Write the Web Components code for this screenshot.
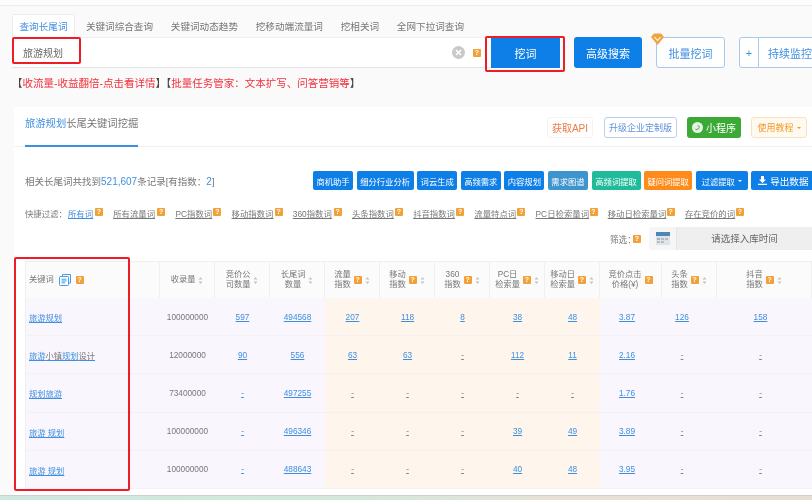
<!DOCTYPE html>
<html lang="zh">
<head>
<meta charset="utf-8">
<title>长尾词挖掘</title>
<style>
  html, body { margin: 0; padding: 0; width: 812px; height: 500px; overflow: hidden; background: #fafafa; }
  body { font-family: "Liberation Sans", "Noto Sans CJK SC", sans-serif; color: #666; }
</style>
</head>
<body>
<word-app></word-app>
<script>
'use strict';

const BLUE = '#0f7fe8';
const LINK = '#3f8fe0';

class XHelp extends HTMLElement {
  constructor() {
    super();
    this.attachShadow({ mode: 'open' }).innerHTML = `
      <style>
        :host {
          display: inline-flex; align-items: center; justify-content: center;
          flex: none; width: 8px; height: 8px; border-radius: 1px;
          background: #f2a138; color: #fff; font: bold 7px/8px "Liberation Sans", sans-serif;
        }
      </style>?`;
  }
}

class XSort extends HTMLElement {
  constructor() {
    super();
    this.attachShadow({ mode: 'open' }).innerHTML = `
      <style>:host { display: inline-flex; flex: none; width: 5px; height: 9px; }</style>
      <svg width="5" height="9" viewBox="0 0 5 9"><path d="M2.5 1 4.5 3.4H.5zM2.5 8 .5 5.6h4z" fill="#c4c4c4"/></svg>`;
  }
}

class XBtn extends HTMLElement {
  constructor() {
    super();
    this.attachShadow({ mode: 'open' }).innerHTML = `
      <style>
        :host {
          display: inline-flex; align-items: center; justify-content: center; gap: 3px;
          flex: none; box-sizing: border-box; height: 19px; border-radius: 2px;
          background: var(--bg, ${BLUE}); color: var(--fg, #fff); border: 1px solid var(--bd, transparent);
          font-size: var(--fs, 8.3px); white-space: nowrap;
        }
      </style><slot></slot>`;
  }
}

class XTabs extends HTMLElement {
  constructor() {
    super();
    const tabs = ['查询长尾词', '关键词综合查询', '关键词动态趋势', '挖移动端流量词', '挖相关词', '全网下拉词查询'];
    this.attachShadow({ mode: 'open' }).innerHTML = `
      <style>
        :host { display: flex; height: 23px; margin: 8px 0 0 12px; font-size: 9.6px; color: #777; }
        span { padding: 0 8.9px; line-height: 25px; white-space: nowrap; }
        span.on {
          box-sizing: border-box; width: 63px; padding: 0; text-align: center; margin-right: 2px;
          color: ${LINK}; background: #fff; border: 1px solid #ececec; border-bottom: 0; border-radius: 2px 2px 0 0;
          line-height: 23px;
        }
      </style>
      ${tabs.map((t, i) => `<span class="${i ? '' : 'on'}">${t}</span>`).join('')}`;
  }
}

class XSearch extends HTMLElement {
  constructor() {
    super();
    this.attachShadow({ mode: 'open' }).innerHTML = `
      <style>
        :host { display: flex; height: 31px; margin-left: 12px; width: 850px; }
        .field {
          width: 479px; box-sizing: border-box; display: flex; align-items: center; gap: 8px;
          padding: 0 10px 0 11px; background: #fff; border-top: 1px solid #eee; border-bottom: 1px solid #e4e4e4;
        }
        .kw { flex: 1; font-size: 10px; color: #666; }
        x-btn { height: 31px; border-radius: 3px; --fs: 11px; }
        .go { width: 69px; border-radius: 0; margin-right: 14px; }
        .adv { width: 68px; margin-right: 14px; }
        .batch { width: 69px; --bg: #fff; --fg: ${LINK}; --bd: #a9c9ec; margin-right: 14px; position: relative; }
        .gem { position: absolute; left: -6px; top: -5px; }
        .plus { width: 20px; --bg: #fff; --fg: ${LINK}; --bd: #a9c9ec; border-radius: 3px 0 0 3px; }
        .watch { width: 60px; justify-content: flex-start; padding-left: 9px; --bg: #fff; --fg: ${LINK}; --bd: #a9c9ec; border-left: 0; border-radius: 0 3px 3px 0; }
      </style>
      <div class="field">
        <span class="kw">旅游规划</span>
        <svg width="13" height="13" viewBox="0 0 13 13"><circle cx="6.5" cy="6.5" r="6.5" fill="#c9c9c9"/><path d="M4 4l5 5M9 4l-5 5" stroke="#fff" stroke-width="1.7"/></svg>
        <x-help></x-help>
      </div>
      <x-btn class="go">挖词</x-btn>
      <x-btn class="adv">高级搜索</x-btn>
      <x-btn class="batch">批量挖词
        <svg class="gem" width="13" height="12" viewBox="0 0 13 12"><path d="M3 .5h7l3 3.5-6.5 8L0 4z" fill="#eea33c"/><path d="M3.5 4 6.5 7.5 9.5 4" fill="none" stroke="#fff" stroke-width="1.1"/></svg>
      </x-btn>
      <x-btn class="plus">+</x-btn>
      <x-btn class="watch">持续监控</x-btn>`;
  }
}

class XNotice extends HTMLElement {
  constructor() {
    super();
    this.attachShadow({ mode: 'open' }).innerHTML = `
      <style>
        :host { display: block; height: 39px; margin-left: 12px; font-size: 10.5px; line-height: 30px; color: #444; white-space: nowrap; }
        b { font-weight: normal; color: #f2303a; }
      </style>
      【<b>收流量-收益翻倍-点击看详情</b>】【<b>批量任务管家\uFF1A文本扩写、问答营销等</b>】`;
  }
}

class XPanelHead extends HTMLElement {
  constructor() {
    super();
    this.attachShadow({ mode: 'open' }).innerHTML = `
      <style>
        :host {
          display: flex; align-items: flex-start; height: 40px; box-sizing: border-box;
          padding-left: 11px; border-bottom: 1px solid #f1f1f1;
        }
        .title {
          box-sizing: border-box; height: 40px; width: 113px; padding-top: 10px; font-size: 10.3px; line-height: 13px;
          color: #777; border-bottom: 2px solid ${LINK}; white-space: nowrap;
        }
        .title em { font-style: normal; color: ${LINK}; }
        .acts { display: flex; align-items: center; margin: 10px 0 0 409px; }
        x-btn { height: 21px; --fs: 9px; border-radius: 3px; }
        .api { width: 46px; margin-right: 11px; --bg: #fff; --fg: #ee7a45; --bd: #f8f2ee; --fs: 10px; }
        .ent { width: 73px; margin-right: 10px; --bg: #fff; --fg: #5f92dc; --bd: #bccff0; }
        .app { width: 54px; margin-right: 10px; --bg: #3aa935; --fs: 10px; }
        .doc { width: 56px; --bg: #fffaf1; --fg: #f39a26; --bd: #fbe2bd; }
        .caret { width: 0; height: 0; border: 2.5px solid transparent; border-top-color: currentColor; border-bottom: 0; }
      </style>
      <div class="title"><em>旅游规划</em>长尾关键词挖掘</div>
      <div class="acts">
        <x-btn class="api">获取API</x-btn>
        <x-btn class="ent">升级企业定制版</x-btn>
        <x-btn class="app">
          <svg width="11" height="11" viewBox="0 0 11 11"><circle cx="5.5" cy="5.5" r="5.5" fill="#e6f3e4"/><path d="M3.6 6.8a1.3 1.3 0 0 0 2 .6L7.2 5.6a1.3 1.3 0 0 0-1.8-1.7" fill="none" stroke="#6cb968" stroke-width="1.1"/></svg>
          小程序
        </x-btn>
        <x-btn class="doc">使用教程<i class="caret"></i></x-btn>
      </div>`;
  }
}

class XStats extends HTMLElement {
  constructor() {
    super();
    const tools = [
      ['商机助手', 40], ['细分行业分析', 57], ['词云生成', 40], ['高频需求', 40], ['内容规划', 40],
      ['需求图谱', 40, '#3d94cf'], ['高频词提取', 49, '#1fbb9a'], ['疑问词提取', 48, '#ff8c1a'],
    ];
    this.attachShadow({ mode: 'open' }).innerHTML = `
      <style>
        :host { display: flex; align-items: center; height: 19px; margin-top: 24px; padding-left: 11px; font-size: 9.5px; color: #777; white-space: nowrap; }
        .sum { width: 288px; flex: none; }
        em { font-style: normal; color: ${LINK}; font-size: 10px; }
        .tools { display: flex; gap: 3.6px; }
        .caret { width: 0; height: 0; border: 2.5px solid transparent; border-top-color: #fff; border-bottom: 0; }
        .out { --fs: 9.6px; width: 64px; }
      </style>
      <div class="sum">相关长尾词共找到<em>521,607</em>条记录[有指数\uFF1A<em>2</em>]</div>
      <div class="tools">
        ${tools.map(([t, w, c]) => `<x-btn style="width:${w}px;${c ? `--bg:${c}` : ''}">${t}</x-btn>`).join('')}
        <x-btn style="width:52px">过滤提取<i class="caret"></i></x-btn>
        <x-btn class="out">
          <svg width="9" height="9" viewBox="0 0 9 9"><path d="M3 0h3v3.500h2L4.500 7 1 3.500h2zM0 7.800h9V9H0z" fill="#fff"/></svg>导出数据
        </x-btn>
      </div>`;
  }
}

class XFilters extends HTMLElement {
  constructor() {
    super();
    const items = [['所有词', 25, true], ['所有流量词', 42], ['PC指数词', 36], ['移动指数词', 41], ['360指数词', 39], ['头条指数词', 41],
      ['抖音指数词', 41], ['流量特点词', 41], ['PC日检索量词', 52], ['移动日检索量词', 57], ['存在竞价的词', 49]];
    this.attachShadow({ mode: 'open' }).innerHTML = `
      <style>
        :host { display: flex; align-items: center; height: 14px; margin-top: 16px; padding-left: 11px; font-size: 8.4px; color: #777; white-space: nowrap; }
        .lead { width: 43px; }
        .it { display: flex; align-items: center; gap: 2px; margin-right: 10.2px; }
        u { display: block; text-underline-offset: 1px; }
        u.on { color: ${LINK}; }
        x-help { margin-bottom: 2px; }
      </style>
      <span class="lead">快捷过滤\uFF1A</span>
      ${items.map(([t, w, on]) => `<span class="it"><u class="${on ? 'on' : ''}" style="width:${w}px">${t}</u><x-help></x-help></span>`).join('')}`;
  }
}

class XDateFilter extends HTMLElement {
  constructor() {
    super();
    this.attachShadow({ mode: 'open' }).innerHTML = `
      <style>
        :host { display: flex; align-items: center; height: 23px; margin-top: 7px; padding-left: 596px; width: 202px; font-size: 9.5px; color: #777; white-space: nowrap; }
        .lab { flex: none; width: 23px; font-size: 8.6px; }
        x-help { margin-right: 8px; }
        .box { display: flex; flex: none; width: 163px; height: 23px; background: #efefef; border-radius: 3px 0 0 3px; }
        .ic { display: flex; align-items: center; justify-content: center; width: 27px; background: #f6f6f6; border-right: 1px solid #e6e6e6; border-radius: 3px 0 0 3px; }
        .tx { flex: 1; text-align: center; line-height: 23px; color: #666; }
      </style>
      <span class="lab">筛选\uFF1A</span><x-help></x-help>
      <div class="box">
        <span class="ic"><svg width="14" height="13" viewBox="0 0 14 13"><rect width="14" height="13" fill="#dfe4ea"/><rect width="14" height="4" fill="#4e86b8"/><rect x="1" y="6" width="3" height="2" fill="#9fb4c8"/><rect x="5" y="6" width="3" height="2" fill="#bbb"/><rect x="9" y="6" width="3" height="2" fill="#bbb"/><rect x="1" y="9" width="3" height="2" fill="#bbb"/><rect x="5" y="9" width="3" height="2" fill="#bbb"/></svg></span>
        <span class="tx">请选择入库时间</span>
      </div>`;
  }
}

const COLS = '135px 55px 55px 55px 55px 55px 55px 55px 55px 62px 55px 95px';

class WordTable extends HTMLElement {
  constructor() {
    super();
    const head = [
      ['收录量', 0], ['竞价公<br>司数量', 0], ['长尾词<br>数量', 0], ['流量<br>指数', 1], ['移动<br>指数', 1], ['360<br>指数', 1],
      ['PC日<br>检索量', 1], ['移动日<br>检索量', 1], ['竞价点击<br>价格(¥)', 2], ['头条<br>指数', 1], ['抖音<br>指数', 1],
    ];
    const rows = [
      ['旅游规划', '100000000', '597', '494568', '207', '118', '8', '38', '48', '3.87', '126', '158'],
      ['旅游<span>小镇</span>规划<span>设计</span>', '12000000', '90', '556', '63', '63', '-', '112', '11', '2.16', '-', '-'],
      ['规划旅游', '73400000', '-', '497255', '-', '-', '-', '-', '-', '1.76', '-', '-'],
      ['旅游 规划', '100000000', '-', '496346', '-', '-', '-', '39', '49', '3.89', '-', '-'],
      ['旅游 规划', '100000000', '-', '488643', '-', '-', '-', '40', '48', '3.95', '-', '-'],
    ];
    const tint = (i) => (i >= 4 && i <= 8 ? 'warm' : 'cool');
    const nudge = { 9: 8, 10: 15, 11: 8 };
    const cell = (v, i) => {
      if (i === 0) return `<div class="td kw cool"><a>${v}</a></div>`;
      if (i === 1) return `<div class="td cool">${v}</div>`;
      const dash = v === '-' && i !== 2 ? ' mute' : '';
      const pad = nudge[i] ? ` style="padding-right:${nudge[i]}px"` : '';
      return `<div class="td ${tint(i)}"${pad}><a class="${dash}">${v}</a></div>`;
    };
    this.attachShadow({ mode: 'open' }).innerHTML = `
      <style>
        :host { display: block; margin: 11px 0 0 11px; font-size: 8.25px; color: #777; }
        .row { display: grid; grid-template-columns: ${COLS}; height: 38.2px; box-sizing: border-box; border-bottom: 1px solid #f5f1f3; }
        .head { height: 37px; background: #fbfbfb; border-top: 1px solid #efefef; border-bottom: 0; }
        .th { display: flex; align-items: center; justify-content: center; gap: 3px; box-sizing: border-box; line-height: 10.5px; text-align: center; border-right: 1px solid #f0f0f0; }
        .th.kw { justify-content: flex-start; padding-left: 3px; gap: 5px; border-left: 1px solid #f0f0f0; }
        .td { display: flex; align-items: center; justify-content: center; box-sizing: border-box; padding-top: 1px; white-space: pre; }
        .td.kw { justify-content: flex-start; padding-left: 3px; border-left: 1px solid #f0ecf3; }
        .cool { background: #f9f6fd; }
        .warm { background: #fef6ec; }
        a { color: ${LINK}; text-decoration: underline; text-underline-offset: 1px; }
        a.mute { color: #7d8794; }
        a span { color: #777; }
      </style>
      <div class="row head">
        <div class="th kw">关键词
          <svg width="12" height="12" viewBox="0 0 12 12" fill="none" stroke="#4a9be8" stroke-width="1"><path d="M3.500 2.500V.5h8v8.500h-2"/><rect x=".5" y="2.500" width="9" height="9" rx=".8"/><path d="M2.500 5.200h5M2.500 7h5M2.500 8.800h3.500"/></svg>
          <x-help></x-help>
        </div>
        ${head.map(([t, k]) => `<div class="th"><span>${t}</span>${k ? '<x-help></x-help>' : ''}${k === 2 ? '' : '<x-sort></x-sort>'}</div>`).join('')}
      </div>
      ${rows.map((r) => `<div class="row">${r.map(cell).join('')}</div>`).join('')}`;
  }
}

class XMarks extends HTMLElement {
  constructor() {
    super();
    this.attachShadow({ mode: 'open' }).innerHTML = `
      <style>
        :host { display: block; position: absolute; inset: 0; pointer-events: none; }
        i { position: absolute; box-sizing: border-box; border: 2px solid #ee1c25; border-radius: 2px; }
      </style>
      <i style="left:12px;top:37px;width:69px;height:27px"></i>
      <i style="left:485px;top:36px;width:80px;height:36px"></i>
      <i style="left:14px;top:257px;width:116px;height:234px"></i>`;
  }
}

class WordApp extends HTMLElement {
  constructor() {
    super();
    this.attachShadow({ mode: 'open' }).innerHTML = `
      <style>
        :host { display: block; position: relative; width: 812px; height: 500px; overflow: hidden; background: #fafafa; filter: blur(.3px); }
        .top { height: 5px; background: #fdfdfd; border-bottom: 1px solid #eeeeee; }
        .card { margin-left: 14px; width: 798px; height: 388px; background: #fff; overflow: hidden; }
        .strip { height: 5px; border-top: 1px solid #cfcfcf; background: linear-gradient(90deg, #cfe9df 0%, #d3e8da 45%, #e9e0d6 70%, #e6ddd4 100%); }
      </style>
      <div class="top"></div>
      <x-tabs></x-tabs>
      <x-search></x-search>
      <x-notice></x-notice>
      <div class="card">
        <x-panel-head></x-panel-head>
        <x-stats></x-stats>
        <x-filters></x-filters>
        <x-date-filter></x-date-filter>
        <word-table></word-table>
      </div>
      <div class="strip"></div>
      <x-marks></x-marks>`;
  }
}

customElements.define('x-help', XHelp);
customElements.define('x-sort', XSort);
customElements.define('x-btn', XBtn);
customElements.define('x-tabs', XTabs);
customElements.define('x-search', XSearch);
customElements.define('x-notice', XNotice);
customElements.define('x-panel-head', XPanelHead);
customElements.define('x-stats', XStats);
customElements.define('x-filters', XFilters);
customElements.define('x-date-filter', XDateFilter);
customElements.define('word-table', WordTable);
customElements.define('x-marks', XMarks);
customElements.define('word-app', WordApp);
</script>
</body>
</html>
